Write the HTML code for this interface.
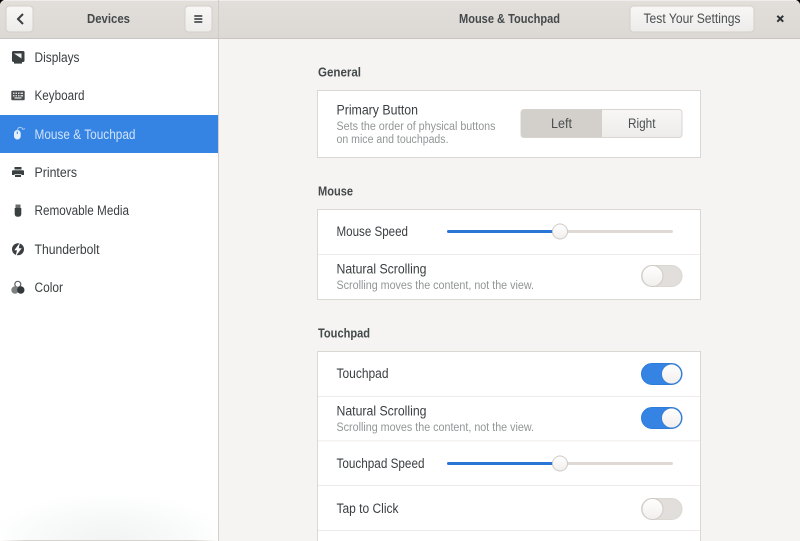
<!DOCTYPE html>
<html lang="en">
<head>
<meta charset="utf-8">
<title>Mouse &amp; Touchpad</title>
<style>
html,body{margin:0;padding:0;width:800px;height:541px;overflow:hidden;background:#f5f4f2}
svg{display:block}
text{font-family:"Liberation Sans",sans-serif;font-size:13.5px;fill:#3a3f41}
.b{font-weight:700;font-size:13px;fill:#44494b}
.h{font-weight:700;font-size:13px;fill:#44494b}
.d{font-size:11.5px;fill:#929596}
</style>
</head>
<body>
<svg width="800" height="541" viewBox="0 0 800 541" xmlns="http://www.w3.org/2000/svg">
<defs>
<linearGradient id="hd" x1="0" y1="0" x2="0" y2="1"><stop offset="0" stop-color="#e2dfdb"/><stop offset="1" stop-color="#dcd8d4"/></linearGradient>
<linearGradient id="bt" x1="0" y1="0" x2="0" y2="1"><stop offset="0" stop-color="#f8f7f6"/><stop offset="1" stop-color="#eeecea"/></linearGradient>
<linearGradient id="kn" x1="0" y1="0" x2="0" y2="1"><stop offset="0" stop-color="#ffffff"/><stop offset="1" stop-color="#f1efed"/></linearGradient>
<radialGradient id="sh" cx="0.5" cy="1" r="0.55" gradientTransform="translate(0.5 1) scale(1 1.9) translate(-0.5 -1)"><stop offset="0" stop-color="#f2f3f3"/><stop offset="0.55" stop-color="#f8f9f9"/><stop offset="1" stop-color="#ffffff"/></radialGradient>
<linearGradient id="ln" x1="0" y1="0" x2="1" y2="0"><stop offset="0" stop-color="#ffffff"/><stop offset="0.12" stop-color="#d6d2cc"/><stop offset="0.88" stop-color="#d6d2cc"/><stop offset="1" stop-color="#ffffff"/></linearGradient>
</defs>

<!-- content background -->
<rect x="219" y="38" width="581" height="503" fill="#f5f4f2"/>

<!-- sidebar -->
<rect x="0" y="38" width="218" height="503" fill="#ffffff"/>
<rect x="0" y="495" width="218" height="46" fill="url(#sh)"/>
<rect x="0" y="540" width="218" height="1" fill="url(#ln)"/>
<rect x="218" y="38" width="1" height="503" fill="#d3cfca"/>
<rect x="0" y="115" width="218" height="38" fill="#3584e4"/>

<!-- header -->
<rect x="0" y="0" width="800" height="38" fill="url(#hd)"/>
<rect x="0" y="0" width="800" height="1" fill="#f0eeec"/>
<rect x="0" y="38" width="800" height="1" fill="#c9c5c0"/>
<rect x="218" y="0" width="1" height="38" fill="#cfcbc6"/>
<path d="M0 0H4Q1 1 0 4Z" fill="#000"/>
<path d="M800 0H796Q799 1 800 4Z" fill="#000"/>

<!-- header buttons -->
<rect x="6" y="6" width="27" height="26" rx="3.500" fill="url(#bt)" stroke="#d3cfca" stroke-width="1"/>
<path d="M23 14L18 19L23 24" fill="none" stroke="#3a3f41" stroke-width="2"/>
<rect x="185" y="6" width="27" height="26" rx="3.500" fill="url(#bt)" stroke="#d3cfca" stroke-width="1"/>
<path d="M194.300 16h8M194.300 19h8M194.300 22h8" fill="none" stroke="#2e3436" stroke-width="1.600"/>
<rect x="630" y="6" width="124" height="26" rx="3.500" fill="url(#bt)" stroke="#d3cfca" stroke-width="1"/>
<path d="M777.300 15.800L783.200 21.700M783.200 15.800L777.300 21.700" fill="none" stroke="#2e3436" stroke-width="2"/>

<text x="87" y="23" class="b" textLength="43" lengthAdjust="spacingAndGlyphs">Devices</text>
<text x="459" y="23" class="b" textLength="101" lengthAdjust="spacingAndGlyphs">Mouse &amp; Touchpad</text>
<text x="643.500" y="23" textLength="97" lengthAdjust="spacingAndGlyphs" style="fill:#4a4f51">Test Your Settings</text>

<!-- sidebar items -->
<text x="34.500" y="62" textLength="45" lengthAdjust="spacingAndGlyphs">Displays</text>
<text x="34.500" y="100" textLength="50" lengthAdjust="spacingAndGlyphs">Keyboard</text>
<text x="34.500" y="139" textLength="101" lengthAdjust="spacingAndGlyphs" style="fill:#cfe2f9">Mouse &amp; Touchpad</text>
<text x="34.500" y="177" textLength="42.500" lengthAdjust="spacingAndGlyphs">Printers</text>
<text x="34.500" y="215" textLength="94.500" lengthAdjust="spacingAndGlyphs">Removable Media</text>
<text x="34.500" y="254" textLength="65" lengthAdjust="spacingAndGlyphs">Thunderbolt</text>
<text x="34.500" y="292" textLength="28.500" lengthAdjust="spacingAndGlyphs">Color</text>

<!-- sidebar icons -->
<!-- display -->
<path d="M13.500 51h9.500q1.500 0 1.500 1.500v8q0 1.500-1.500 1.500H13.500q-1.500 0-1.500-1.500v-8q0-1.500 1.500-1.500z" fill="#3a3f41"/>
<path d="M14 53.500h7.500v5z" fill="#f2f2f2"/>
<rect x="14" y="62" width="8" height="1.600" fill="#3a3f41"/>
<!-- keyboard -->
<rect x="11.300" y="90.800" width="13.400" height="9.400" rx="1" fill="#4a4e50"/>
<path d="M13 92.500h1.500v1.500H13zM15.500 92.500H17v1.500h-1.500zM18 92.500h1.500v1.500H18zM20.500 92.500H23v1.500h-2.500zM13 95h1.500v1.500H13zM15.500 95H17v1.500h-1.500zM18 95h1.500v1.500H18zM20.500 95H23v1.500h-2.500zM14.500 97.300h7v1.300h-7z" fill="#d8d8d8"/>
<!-- mouse -->
<rect x="14" y="130" width="6.700" height="9.500" rx="3.300" fill="#e6f0fc"/>
<rect x="16.800" y="131.500" width="1" height="2.500" fill="#3584e4"/>
<path d="M17.500 130q.5-3 3-2.500t2 1.500q1 .6 2.500-.5" fill="none" stroke="#a9cbf4" stroke-width="1"/>
<!-- printer -->
<rect x="14.500" y="167" width="7" height="2.500" fill="#3a3f41"/>
<path d="M13 170.300h10q1 0 1 1v3.700h-2.500v-.8h-7v.8H12v-3.700q0-1 1-1z" fill="#3a3f41"/>
<rect x="15" y="175" width="6" height="2" fill="#3a3f41"/>
<!-- usb -->
<rect x="15.500" y="204.500" width="5" height="3.500" fill="#686c6e"/>
<path d="M14.700 208h6.600v6q0 2.800-3.300 2.800t-3.300-2.800z" fill="#3a3f41"/>
<!-- thunderbolt -->
<circle cx="18" cy="249.300" r="6" fill="#3a3f41"/>
<path d="M20 242.500L14.300 250.300H17L15.500 256.500L21.700 248.300H18.800Z" fill="#fff"/>
<!-- color -->
<circle cx="17.800" cy="284.300" r="3" fill="#fff" stroke="#5c6062" stroke-width="1.200"/>
<circle cx="15" cy="290" r="3.700" fill="#7c8081"/>
<circle cx="20.800" cy="290" r="3.700" fill="#33383a"/>

<!-- headings -->
<text x="318" y="76.500" class="h" textLength="43" lengthAdjust="spacingAndGlyphs">General</text>
<text x="318" y="195.500" class="h" textLength="35" lengthAdjust="spacingAndGlyphs">Mouse</text>
<text x="318" y="337.500" class="h" textLength="52" lengthAdjust="spacingAndGlyphs">Touchpad</text>

<!-- general box -->
<rect x="317.500" y="90.500" width="383" height="67" fill="#fff" stroke="#dbd8d3"/>
<text x="336.500" y="114.500" textLength="81.500" lengthAdjust="spacingAndGlyphs">Primary Button</text>
<text x="336.500" y="130" class="d" textLength="159" lengthAdjust="spacingAndGlyphs">Sets the order of physical buttons</text>
<text x="336.500" y="143" class="d" textLength="112" lengthAdjust="spacingAndGlyphs">on mice and touchpads.</text>
<rect x="521" y="109.500" width="161" height="28" rx="3" fill="url(#bt)" stroke="#d9d5d0"/>
<path d="M524 109.500H602V137.500H524Q521 137.500 521 134.500V112.500Q521 109.500 524 109.500Z" fill="#d3cfca"/>
<text x="551" y="128" textLength="21" lengthAdjust="spacingAndGlyphs" style="fill:#4a4f51">Left</text>
<text x="628" y="128" textLength="27.500" lengthAdjust="spacingAndGlyphs" style="fill:#4a4f51">Right</text>

<!-- mouse box -->
<rect x="317.500" y="209.500" width="383" height="90" fill="#fff" stroke="#dbd8d3"/>
<rect x="318" y="254" width="382" height="1" fill="#eeecea"/>
<text x="336.500" y="236" textLength="71.500" lengthAdjust="spacingAndGlyphs">Mouse Speed</text>
<rect x="447" y="230" width="226" height="3" rx="1.500" fill="#dfd9d5"/>
<rect x="447" y="230" width="110" height="3" rx="1.500" fill="#2a76d6"/>
<circle cx="560" cy="231.500" r="7.500" fill="url(#kn)" stroke="#cfcac5"/>
<text x="336.500" y="273.500" textLength="90" lengthAdjust="spacingAndGlyphs">Natural Scrolling</text>
<text x="336.500" y="289" class="d" textLength="197.500" lengthAdjust="spacingAndGlyphs">Scrolling moves the content, not the view.</text>
<rect x="641.500" y="265.500" width="40.500" height="21" rx="10.500" fill="#e1dedb" stroke="#dbd7d3"/>
<circle cx="652.500" cy="276" r="10.500" fill="url(#kn)" stroke="#cfcac5"/>

<!-- touchpad box -->
<rect x="317.500" y="351.500" width="383" height="200" fill="#fff" stroke="#dbd8d3"/>
<rect x="318" y="396" width="382" height="1" fill="#eeecea"/>
<rect x="318" y="440" width="382" height="1.500" fill="#f4f3f1"/>
<rect x="318" y="485" width="382" height="1" fill="#eeecea"/>
<rect x="318" y="530" width="382" height="1" fill="#eeecea"/>

<text x="336.500" y="378" textLength="52" lengthAdjust="spacingAndGlyphs">Touchpad</text>
<rect x="641.500" y="363.500" width="40.500" height="21" rx="10.500" fill="#3584e4" stroke="#2f7bd8"/>
<circle cx="671.500" cy="374" r="10" fill="url(#kn)" stroke="#3a7fd6"/>

<text x="336.500" y="415.500" textLength="90" lengthAdjust="spacingAndGlyphs">Natural Scrolling</text>
<text x="336.500" y="431" class="d" textLength="197.500" lengthAdjust="spacingAndGlyphs">Scrolling moves the content, not the view.</text>
<rect x="641.500" y="407.500" width="40.500" height="21" rx="10.500" fill="#3584e4" stroke="#2f7bd8"/>
<circle cx="671.500" cy="418" r="10" fill="url(#kn)" stroke="#3a7fd6"/>

<text x="336.500" y="468" textLength="88" lengthAdjust="spacingAndGlyphs">Touchpad Speed</text>
<rect x="447" y="462" width="226" height="3" rx="1.500" fill="#dfd9d5"/>
<rect x="447" y="462" width="110" height="3" rx="1.500" fill="#2a76d6"/>
<circle cx="560" cy="463.500" r="7.500" fill="url(#kn)" stroke="#cfcac5"/>

<text x="336.500" y="513" textLength="62" lengthAdjust="spacingAndGlyphs">Tap to Click</text>
<rect x="641.500" y="498.500" width="40.500" height="21" rx="10.500" fill="#e1dedb" stroke="#dbd7d3"/>
<circle cx="652.500" cy="509" r="10.500" fill="url(#kn)" stroke="#cfcac5"/>
</svg>
</body>
</html>
